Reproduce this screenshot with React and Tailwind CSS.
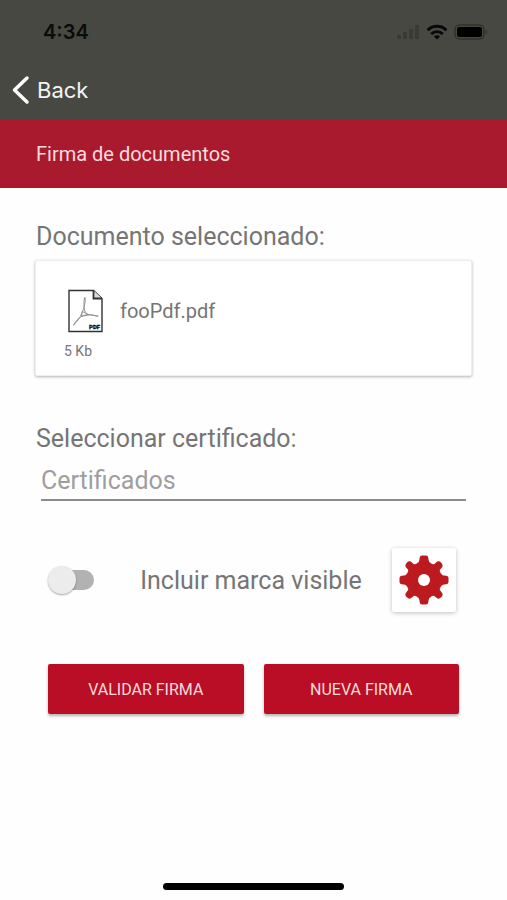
import { useState } from 'react'

function SignalIcon() {
  return (
    <svg viewBox="0 0 24 16" className="w-6 h-4" fill="#3a3a35" aria-hidden="true">
      <rect x="1" y="11" width="4" height="4" rx="1" />
      <rect x="7" y="8" width="4" height="7" rx="1" />
      <rect x="13" y="5" width="4" height="10" rx="1" />
      <rect x="19" y="1" width="4" height="14" rx="1" />
    </svg>
  )
}

function WifiIcon() {
  return (
    <svg viewBox="0 0 22 16" className="w-[22px] h-4" fill="none" stroke="#080808" aria-hidden="true">
      <path d="M1.6 6.2a13.4 13.4 0 0 1 18.8 0" strokeWidth="3" />
      <path d="M5.2 10a8.3 8.3 0 0 1 11.6 0" strokeWidth="2.8" />
      <path d="M11 15.6 7.9 12.5a4.4 4.4 0 0 1 6.2 0z" fill="#080808" stroke="none" />
    </svg>
  )
}

function BatteryIcon() {
  return (
    <svg viewBox="0 0 34 16" className="w-[34px] h-4" aria-hidden="true">
      <rect x="1" y="1" width="29" height="14" rx="4" fill="none" stroke="#26261f" />
      <rect x="3" y="3" width="25" height="10" rx="2" fill="#000" />
      <path d="M31.5 5.5c2 .8 2 4.2 0 5z" fill="#33332e" />
    </svg>
  )
}

function PdfIcon() {
  return (
    <svg viewBox="0 0 36 44" className="w-9 h-11 shrink-0" fill="none" aria-hidden="true">
      <path d="M1 1.5h24.5l8.500 8v33H1z" stroke="#333" strokeWidth="1.4" />
      <path d="M25.5 1.5v8H34" fill="#ddd" stroke="#333" strokeWidth="1.8" />
      <path
        d="M16.500 8.500c-1 5-.6 10 .3 13.500 1 2 2.200 3 4 3.600 3 .6 6 1 9 1.500M17.200 9c.4 4.500-1 9.500-3 14.500-2 5-5 9.500-8.700 12.500M5.500 36c2.500-4.500 6-8 10.300-9.600 4-1.300 9-.6 14 .8M14.500 22.500l6 3.400-6.500 1.300z"
        stroke="#8a8a8a"
        strokeWidth="0.900"
        strokeLinecap="round"
        strokeLinejoin="round"
      />
      <text x="21" y="40" fill="#111" stroke="#111" strokeWidth="0.3" fontSize="6" fontWeight="900" fontFamily="Roboto, sans-serif">PDF</text>
    </svg>
  )
}

function GearIcon() {
  return (
    <svg viewBox="-25 -25 50 50" className="w-[50px] h-[50px]" fill="#bd1a1f" aria-hidden="true">
      {[0, 90, 180, 270].map(a => (
        <g key={a} transform={`rotate(${a})`}>
          <path d="M-7.5-16.500Q-4.700-17.500-4.600-20L-4.300-22.500Q-4-24.500-2-24.500H2Q4-24.500 4.300-22.500L4.600-20Q4.700-17.500 7.500-16.500z" />
        </g>
      ))}
      {[45, 135, 225, 315].map(a => (
        <g key={a} transform={`rotate(${a})`}>
          <circle cy="-20.500" r="3.900" />
          <path d="M-6-17Q-3.500-17.500-3.700-20H3.700Q3.500-17.500 6-17z" />
        </g>
      ))}
      <circle r="18" />
      <circle r="6" fill="#fff" />
    </svg>
  )
}

function StatusBar() {
  return (
    <div className="h-[60px] pt-[3px] flex items-center justify-between pl-[43px] pr-[19px]">
      <span className="font-['Inter',sans-serif] text-[20px] leading-6 font-semibold text-[#0b0b0a]">4:34</span>
      <div className="flex items-center gap-1.5">
        <SignalIcon />
        <WifiIcon />
        <BatteryIcon />
      </div>
    </div>
  )
}

export default function App() {
  const [visibleMark, setVisibleMark] = useState(false)
  const [certificate, setCertificate] = useState('')

  return (
    <div className="min-h-screen flex flex-col bg-[#fefefe] font-['Roboto',sans-serif] text-[#757575]">
      <header>
        <div className="bg-[#474842]">
          <StatusBar />
          <nav className="h-[59px] flex items-center px-3">
            <a href="#back" className="flex items-center gap-[7px] font-['Inter',sans-serif] text-[22px] leading-7 text-[#f4f4f2]">
              <svg viewBox="0 0 18 30" className="w-[18px] h-[30px]" fill="none" stroke="#fff" strokeWidth="3.5" strokeLinecap="round" strokeLinejoin="round" aria-hidden="true">
                <path d="M15 3 2.500 15 15 27" />
              </svg>
              Back
            </a>
          </nav>
        </div>
        <div className="h-[69px] flex items-center px-9 bg-[#aa1a2f]">
          <h1 className="text-[20px] leading-7 text-[#fbdcdc]">Firma de documentos</h1>
        </div>
      </header>

      <main className="flex-1 px-9 pt-[33px]">
        <h2 className="text-[25px] leading-8">Documento seleccionado:</h2>
        <section className="mt-[7px] -mx-px px-7 pt-7 pb-3.5 rounded-xs bg-white border border-[#eee] shadow-[0_1px_3px_rgba(0,0,0,0.3)]">
          <div className="flex items-center gap-4 pl-1">
            <PdfIcon />
            <p className="text-[20px] leading-7">fooPdf.pdf</p>
          </div>
          <p className="mt-2 text-[14px] leading-5">5 Kb</p>
        </section>

        <label htmlFor="certificate" className="block mt-[47px] text-[25px] leading-8">Seleccionar certificado:</label>
        <input
          id="certificate"
          type="text"
          value={certificate}
          onChange={e => setCertificate(e.target.value)}
          placeholder="Certificados"
          className="block mx-[5px] mt-1 w-[calc(100%-10px)] h-[42px] pt-0.5 border-b-2 border-[#8c8c8c] text-[25px] leading-8 placeholder:text-[#9e9e9e] outline-none"
        />

        <div className="mt-[47px] flex items-center justify-between pl-3 pr-[15px]">
          <input
            id="visible-mark"
            type="checkbox"
            role="switch"
            checked={visibleMark}
            onChange={e => setVisibleMark(e.target.checked)}
            className="appearance-none relative w-[46px] h-8 shrink-0 before:absolute before:left-1 before:right-0 before:top-1.5 before:h-5 before:rounded-full before:bg-[#b2b2b2] after:absolute after:left-0 after:top-0.5 after:size-7 after:rounded-full after:bg-[#ececec] after:shadow-[0_1px_2px_rgba(0,0,0,0.35)] checked:after:left-[18px]"
          />
          <label htmlFor="visible-mark" className="ml-4 pt-0.5 text-[25px] leading-8">Incluir marca visible</label>
          <button type="button" aria-label="Configurar marca" className="size-16 flex items-center justify-center rounded-xs bg-white shadow-[0_1px_4px_rgba(0,0,0,0.25)]">
            <GearIcon />
          </button>
        </div>

        <div className="mt-[52px] px-3 grid grid-cols-2 gap-5">
          <button type="button" className="h-[50px] pt-0.5 rounded-xs bg-[#b90e25] text-[16px] leading-6 text-[#fbdcdc] shadow-[0_2px_3px_rgba(0,0,0,0.3)]">VALIDAR FIRMA</button>
          <button type="button" className="h-[50px] pt-0.5 rounded-xs bg-[#b90e25] text-[16px] leading-6 text-[#fbdcdc] shadow-[0_2px_3px_rgba(0,0,0,0.3)]">NUEVA FIRMA</button>
        </div>
      </main>

      <footer className="flex justify-center pb-2.5">
        <div className="w-[181px] h-[7px] rounded-full bg-black" />
      </footer>
    </div>
  )
}
